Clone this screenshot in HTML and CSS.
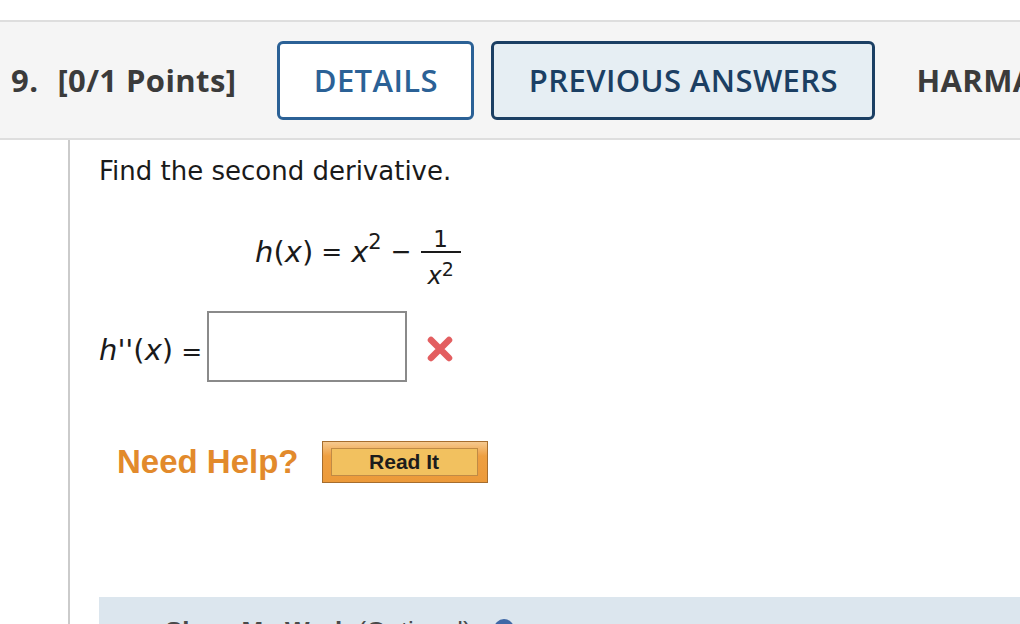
FILE: index.html
```html
<!DOCTYPE html>
<html>
<head>
<meta charset="utf-8">
<link rel="stylesheet" href="styles.css">
</head>
<body>
<div class="page">
  <div class="qhead">
    <span class="qnum">9.</span>
    <span class="qpoints">[0/1 Points]</span>
    <span class="tab tab-details">DETAILS</span>
    <span class="tab tab-prev">PREVIOUS ANSWERS</span>
    <span class="qsource">HARMATHAP12 2.1.011.</span>
  </div>
  <div class="qbody">
    <p class="prompt">Find the second derivative.</p>
    <div class="eq">
      <span class="m"><i>h</i>(<i>x</i>)</span>
      <span class="m op">=</span>
      <span class="m xsq"><i>x</i><sup class="sup">2</sup></span>
      <span class="m op minus">−</span>
      <span class="frac">
        <span class="num">1</span>
        <span class="bar"></span>
        <span class="den"><i>x</i><sup class="sup2">2</sup></span>
      </span>
    </div>
    <div class="answer">
      <span class="alabel"><i>h</i><i class="prime">''</i>(<i>x</i>)<span class="eqs">=</span></span>
      <span class="abox"></span>
      <svg class="wrong" width="28" height="28" viewBox="0 0 28 28">
        <path d="M5 5 L23 23 M23 5 L5 23" stroke="#e35e60" stroke-width="6.5" stroke-linecap="round" fill="none"/>
      </svg>
    </div>
    <div class="help">
      <span class="needhelp">Need Help?</span>
      <span class="readit"><span class="readit-inner">Read It</span></span>
    </div>
    <div class="work">
      <span class="work-title">Show My Work</span>
      <span class="work-opt">(Optional)</span>
      <span class="work-icon">?</span>
    </div>
  </div>
</div>
</body>
</html>
```

FILE: styles.css
```css
html, body {
  margin: 0;
  padding: 0;
  background: #ffffff;
  overflow: hidden;
}
body {
  width: 1020px;
  height: 624px;
  font-family: "DejaVu Sans", Verdana, sans-serif;
  color: #1a1a1a;
}
.page {
  padding-top: 20px;
}
.qhead {
  display: flex;
  align-items: center;
  height: 116px;
  border-top: 2px solid #dedede;
  border-bottom: 2px solid #dedede;
  background: #f5f5f5;
  padding-left: 11px;
  white-space: nowrap;
  overflow: hidden;
  font-family: "Open Sans", sans-serif;
  font-size: 31px;
  letter-spacing: 0.4px;
  font-weight: 700;
  color: #3b3b3b;
}
.qhead > span {
  flex-shrink: 0;
}
.qpoints {
  margin-left: 19px;
}
.tab {
  box-sizing: border-box;
  height: 79px;
  border: 3px solid #2b6196;
  border-radius: 6px;
  display: flex;
  align-items: center;
  justify-content: center;
  font-weight: 600;
  color: #2b6196;
}
.tab-details {
  width: 197px;
  margin-left: 41px;
  background: #ffffff;
}
.tab-prev {
  width: 384px;
  margin-left: 17px;
  background: #e6eef3;
  border-color: #1b3f63;
  color: #1b3f63;
}
.qsource {
  margin-left: 41px;
}
.qbody {
  margin-left: 68px;
  border-left: 2px solid #cbcbcb;
  padding-left: 29px;
  height: 500px;
}
.prompt {
  margin: 0;
  padding-top: 16px;
  font-size: 26px;
  line-height: 30px;
}
.eq {
  display: flex;
  align-items: center;
  margin-top: 30px;
  margin-left: 156px;
  height: 72px;
  font-size: 29px;
}
.m {
  line-height: 34px;
  white-space: nowrap;
}
.op {
  font-size: 25px;
  margin-left: 8px;
}
.xsq {
  margin-left: 9px;
}
.minus {
  margin-left: 9px;
}
.sup {
  font-size: 21px;
  line-height: 0;
  vertical-align: 13px;
}
.frac {
  display: flex;
  flex-direction: column;
  align-items: center;
  margin-left: 9px;
  width: 40px;
}
.num {
  font-size: 23px;
  line-height: 23px;
  padding-top: 12px;
}
.bar {
  width: 40px;
  height: 2px;
  background: #1a1a1a;
}
.den {
  font-size: 24px;
  line-height: 23px;
  padding-top: 12px;
  white-space: nowrap;
}
.sup2 {
  font-size: 19px;
  line-height: 0;
  vertical-align: 8px;
}
.answer {
  display: flex;
  align-items: flex-start;
  margin-top: 23px;
  height: 71px;
}
.alabel {
  font-size: 29px;
  line-height: 34px;
  margin-top: 22px;
  white-space: nowrap;
}
.prime {
  margin-left: 0;
  margin-right: 0;
}
.eqs {
  font-size: 25px;
  margin-left: 8px;
}
.abox {
  box-sizing: border-box;
  width: 200px;
  height: 71px;
  margin-left: 5px;
  border: 2px solid #8a8a8a;
  background: #ffffff;
}
.wrong {
  margin-left: 19px;
  margin-top: 24px;
}
.help {
  display: flex;
  align-items: center;
  margin-top: 59px;
  padding-left: 18px;
}
.needhelp {
  font-family: "Liberation Sans", Arial, sans-serif;
  font-weight: 700;
  font-size: 33px;
  color: #e28a2c;
}
.readit {
  box-sizing: border-box;
  width: 166px;
  height: 42px;
  margin-left: 23px;
  padding: 6px 9px 6px 8px;
  border: 1px solid #a66d2e;
  background: linear-gradient(#f6c98f, #ee9f41 35%, #ec9a3a);
  display: flex;
}
.readit-inner {
  flex: 1;
  border: 1px solid #c08a45;
  background: #f2c15f;
  display: flex;
  align-items: center;
  justify-content: center;
  font-family: "Liberation Sans", Arial, sans-serif;
  font-weight: 700;
  font-size: 21px;
  color: #1c1c1c;
}
.work {
  display: flex;
  align-items: flex-start;
  margin-top: 114px;
  background: #dce6ee;
  height: 60px;
  padding-left: 66px;
  padding-top: 19px;
  box-sizing: border-box;
  font-family: "Liberation Sans", Arial, sans-serif;
  font-weight: 700;
  font-size: 26px;
  line-height: 30px;
  color: #4a4a4a;
  white-space: nowrap;
}
.work-opt {
  margin-left: 8px;
  font-weight: 400;
}
.work-icon {
  margin-left: 22px;
  margin-top: 3px;
  width: 20px;
  height: 20px;
  border-radius: 50%;
  background: #3f68a6;
  color: #fff;
  font-size: 14px;
  line-height: 20px;
  text-align: center;
}
```
